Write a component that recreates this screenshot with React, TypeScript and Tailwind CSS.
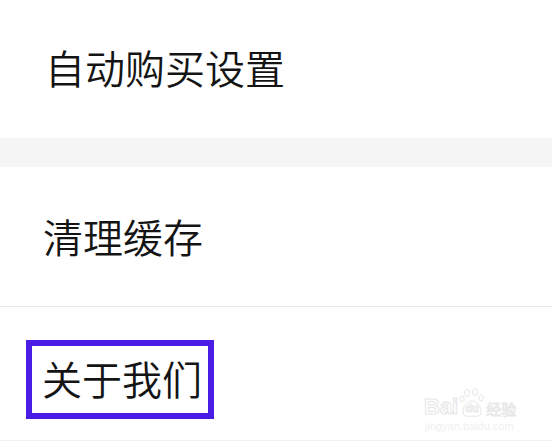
import React from "react";

const cjk = { fontFamily: '"Noto Sans CJK SC", "Noto Sans", sans-serif' };

export default function App() {
  return (
    <div className="relative w-[552px] h-[448px] bg-white overflow-hidden" style={cjk}>
      <div className="h-[138px] flex items-center pl-[45px] pb-[4px] text-[40px] leading-none font-[350] text-[#141414]">
        自动购买设置
      </div>
      <div className="h-[29px] bg-[#f5f5f5]" />
      <div className="h-[140px] flex items-center pl-[43px] pb-[2px] text-[40px] leading-none font-[350] text-[#141414] border-b border-[#e6e6e6]">
        清理缓存
      </div>
      <div className="h-[134px] pt-[33px] pl-[26px] border-b border-[#f2f2f2]">
        <div className="w-[188px] h-[79px] border-[6px] border-[#4a1de6] flex items-center pl-[10px] pb-[3px] text-[40px] leading-none font-[350] text-[#141414]">
          关于我们
        </div>
      </div>
      <div className="absolute left-[424px] top-[388px] flex flex-col items-start select-none">
        <div className="flex items-end">
          <span
            className="text-[22px] leading-none font-bold text-transparent [-webkit-text-stroke:1px_#e6e6e6]"
            style={{ fontFamily: '"Liberation Sans", sans-serif' }}
          >
            Bai
          </span>
          <span className="relative w-[26px] h-[30px] ml-[1px]">
            <svg width="26" height="30" viewBox="0 0 26 30" className="absolute left-0 top-0">
              <g fill="none" stroke="#e6e6e6" strokeWidth="1">
                <ellipse cx="8" cy="5" rx="2.5" ry="3.5" />
                <ellipse cx="16" cy="4" rx="2.5" ry="3.5" />
                <ellipse cx="3" cy="11" rx="2.2" ry="3" />
                <ellipse cx="22" cy="10" rx="2.2" ry="3" />
                <path d="M4 24 C4 17 9 13 13 13 C17 13 22 17 22 24 C22 28 18 29 13 28 C8 29 4 28 4 24 Z" />
              </g>
            </svg>
            <span
              className="absolute left-[6px] top-[15px] text-[11px] leading-none font-bold text-transparent [-webkit-text-stroke:0.8px_#e6e6e6]"
              style={{ fontFamily: '"Liberation Sans", sans-serif' }}
            >
              du
            </span>
          </span>
          <span className="text-[15px] leading-none ml-[1px] mb-[2px] text-transparent [-webkit-text-stroke:0.8px_#e6e6e6]">
            经验
          </span>
        </div>
        <span
          className="text-[11px] leading-none mt-[3px] ml-[1px] text-[#efefef]"
          style={{ fontFamily: '"Liberation Sans", sans-serif' }}
        >
          jingyan.baidu.com
        </span>
      </div>
    </div>
  );
}
